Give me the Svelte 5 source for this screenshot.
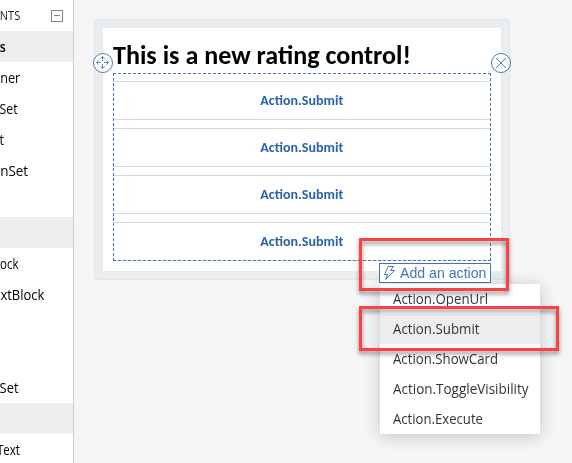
<script>
  const sidebar = [
    { text: 's', shaded: true, bold: true, end: 6, width: 6 },
    { text: 'ner', end: 20, width: 20 },
    { text: 'Set', end: 18, width: 18 },
    { text: 't', end: 4, width: 4.5 },
    { text: 'nSet', end: 28, width: 28 },
    { text: '' },
    { text: '', shaded: true },
    { text: 'ock', end: 18, width: 18.5 },
    { text: 'xtBlock', end: 44, width: 44 },
    { text: '' },
    { text: '' },
    { text: 'Set', end: 19, width: 19 },
    { text: '', shaded: true },
    { text: 'Text', end: 20, width: 23 }
  ];
  const actions = ['Action.Submit', 'Action.Submit', 'Action.Submit', 'Action.Submit'];
  const menu = [
    { text: 'Action.OpenUrl', width: 95 },
    { text: 'Action.Submit', width: 86.5 },
    { text: 'Action.ShowCard', width: 105 },
    { text: 'Action.ToggleVisibility', width: 135.5 },
    { text: 'Action.Execute', width: 90 }
  ];

  // Condenses a label horizontally to the given width.
  function fit(node, width) {
    const natural = node.getBoundingClientRect().width;
    if (natural && width) node.style.transform = `scaleX(${width / natural})`;
  }
</script>

<div class="app">
  <aside>
    <div class="row head">
      <span class="tail" style:width="20px"><span class="narrow" use:fit={20.5}>NTS</span></span>
      <svg class="collapse" width="12" height="12" viewBox="0 0 12 12" fill="none" stroke="#858590">
        <rect x=".5" y=".5" width="11" height="11" /><path d="M3 5.5h6" />
      </svg>
    </div>
    {#each sidebar as item}
      <div class="row" class:shaded={item.shaded} class:bold={item.bold}>
        {#if item.text}
          <span class="tail" style:width="{item.end}px"><span class="narrow" use:fit={item.width}>{item.text}</span></span>
        {/if}
      </div>
    {/each}
  </aside>

  <main>
    <section class="card">
      <div class="surface">
        <h1><span use:fit={298}>This is a new rating control!</span></h1>
        <div class="actions">
          {#each actions as action}
            <div class="action"><span use:fit={83}>{action}</span></div>
          {/each}
          <div class="outline"></div>
        </div>
      </div>
      <svg class="handle move" width="20" height="20" viewBox="0 0 20 20" fill="none" stroke="#6287b8">
        <circle cx="10" cy="10" r="9.5" fill="#fff" stroke="#4a7fb8" />
        <path d="M9.5 3.5v4.4M9.5 11.1v4.4M3.5 9.5h4.4M11.1 9.5h4.4M7.4 5.6l2.1-2.1 2.1 2.1M7.4 13.4l2.1 2.1 2.1-2.1M5.6 7.4L3.5 9.5l2.1 2.1M13.4 7.4l2.1 2.1-2.1 2.1" />
      </svg>
      <svg class="handle close" width="20" height="20" viewBox="0 0 20 20" fill="none" stroke="#5682b8">
        <circle cx="10" cy="10" r="9.5" fill="#fff" stroke="#3f7abd" />
        <path d="M5 5l10 10M15 5L5 15" />
      </svg>
    </section>

    <ul class="menu">
      {#each menu as item, i}
        <li class:active={i === 1}><span use:fit={item.width}>{item.text}</span></li>
      {/each}
    </ul>

    <button class="add">
      <svg width="13" height="16" viewBox="0 0 13 16" fill="none" stroke="#4c7ab0">
        <path d="M5.2 1.5h5.3L7.5 5.5h4L2.5 14.5l2.3-5H1.5z" />
      </svg>
      <span use:fit={86.5}>Add an action</span>
    </button>
    <div class="mark first"></div>
    <div class="mark second"></div>
  </main>
</div>

<style>
  .app {
    display: flex;
    width: 572px;
    height: 463px;
    overflow: hidden;
    background: #f5f5f5;
    font: 14px "Segoe UI", "Open Sans", sans-serif;
    color: #000;
  }
  aside {
    width: 73px;
    flex: none;
    background: #fff;
    border-right: 1px solid #ccc;
    overflow: hidden;
  }
  .row {
    height: 31px;
    display: flex;
    align-items: center;
    line-height: 31px;
    box-sizing: border-box;
  }
  .row.shaded { background: #ededed; }
  .bold { font-weight: 600; }
  .tail { display: flex; justify-content: flex-end; white-space: nowrap; flex: none; }
  .narrow { transform-origin: right; }
  .head { font-size: 12px; justify-content: space-between; padding-right: 10px; color: #222; }
  .collapse { flex: none; }
  main { position: relative; flex: 1; padding: 19px 0 0 20px; }
  .card {
    position: relative;
    box-sizing: border-box;
    width: 416px;
    height: 261px;
    padding: 8px;
    border: 1px solid #e2e5e7;
    border-radius: 4px;
    background: #e9edf0;
  }
  .surface { height: 243px; background: #fff; padding: 10px; box-sizing: border-box; }
  h1 {
    height: 35px;
    margin: 0;
    font: bold 26px/35px Calibri, Carlito, Lato, sans-serif;
    white-space: nowrap;
    color: #000;
  }
  h1 span, li span, .add span { display: inline-block; transform-origin: left; }
  .actions {
    position: relative;
    display: flex;
    flex-direction: column;
    gap: 8px;
    padding-top: 8px;
  }
  .action {
    height: 39px;
    box-sizing: border-box;
    border: solid #dadada;
    border-width: 1px 0;
    display: flex;
    justify-content: center;
    align-items: center;
    font: bold 13.5px Calibri, Carlito, Lato, sans-serif;
    color: #2b62ae;
  }
  .action span { display: inline-block; transform-origin: center; }
  .outline { position: absolute; inset: 0; border: 1px dashed #4278b5; }
  .handle { position: absolute; top: 33px; }
  .move { left: -2px; }
  .close { right: -2px; }
  .menu {
    position: absolute;
    left: 306px;
    top: 284px;
    width: 160px;
    margin: 0;
    padding: 0;
    list-style: none;
    background: #fff;
    box-shadow: 0 2px 16px rgba(0, 0, 0, .2);
    color: #333;
  }
  li { height: 30px; line-height: 30px; padding-left: 13px; box-sizing: border-box; white-space: nowrap; }
  .active { background: #ededed; }
  .add {
    position: absolute;
    left: 305px;
    top: 263px;
    width: 112px;
    height: 20px;
    box-sizing: border-box;
    padding: 0 0 0 3px;
    display: flex;
    align-items: center;
    gap: 4px;
    border: 1px solid #3c76b5;
    background: #fff;
    color: #3f75b3;
    font: 15px/18px "Liberation Sans", Arial, sans-serif;
    white-space: nowrap;
  }
  .add svg { flex: none; }
  .mark {
    position: absolute;
    box-sizing: border-box;
    left: 285px;
    border: 3px solid #fb4141;
    filter: drop-shadow(0 3px 2px rgba(0, 0, 0, .45));
  }
  .first { top: 238px; width: 150px; height: 53px; }
  .second { top: 306px; width: 200px; height: 45px; }
</style>
